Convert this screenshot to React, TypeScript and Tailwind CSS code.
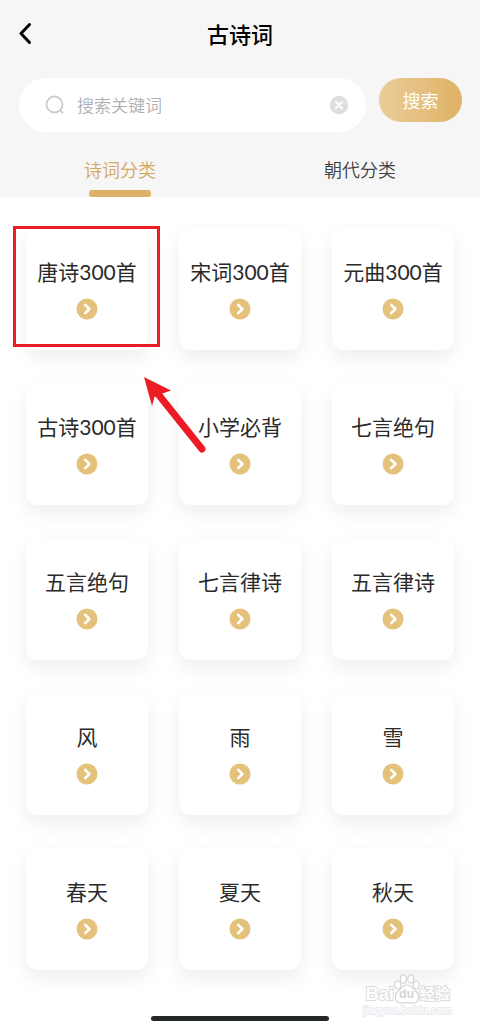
import { useState } from "react";

const categories: string[] = [
    '唐诗300首',
    '宋词300首',
    '元曲300首',
    '古诗300首',
    '小学必背',
    '七言绝句',
    '五言绝句',
    '七言律诗',
    '五言律诗',
    '风',
    '雨',
    '雪',
    '春天',
    '夏天',
    '秋天',
];

const tabs = ['诗词分类', '朝代分类'];

function Tab({ label, active, onClick }: { label: string; active: boolean; onClick: () => void }) {
    return (
        <button
            type="button"
            role="tab"
            aria-selected={active}
            onClick={onClick}
            className="flex flex-1 flex-col items-center gap-[9px] pt-[25px]"
        >
            <span className={active ? 'text-lg leading-6 font-[350] text-[#d4a75c]' : 'text-lg leading-6 font-[350] text-[#404040]'}>{label}</span>
            <span className={active ? 'h-[7px] w-[62px] rounded-[3px] bg-[#dcb16a]' : 'h-[7px] w-[62px]'} />
        </button>
    );
}

function Highlight() {
    return (
        <>
            <div className="pointer-events-none absolute -top-0.5 -left-[13px] h-[121px] w-[147px] border-3 border-[#ed1c24]" />
            <svg
                viewBox="0 0 64 78"
                className="pointer-events-none absolute top-[148px] left-[117px] z-10 h-[78px] w-16"
                aria-hidden="true"
            >
                <path d="M15 18 59 73" stroke="#ed1c24" strokeWidth="7" strokeLinecap="round" />
                <path d="M1 1 28 14.5 18 18 11.5 21 9 30Z" fill="#ed1c24" />
            </svg>
        </>
    );
}

function CategoryCard({ title, highlighted }: { title: string; highlighted: boolean }) {
    return (
        <div className="relative">
            <a
                href="#"
                className="flex h-[122px] flex-col items-center gap-3 rounded-xl bg-white pt-[30px] shadow-[0_8px_20px_rgba(0,0,0,0.07)]"
            >
                <span className="font-['Lato','Noto_Sans_CJK_SC',sans-serif] text-[21px] leading-[28px] whitespace-nowrap text-[#2a2a2a]">{title}</span>
                <svg viewBox="0 0 22 22" className="size-[22px]" aria-hidden="true">
                    <circle cx="11" cy="11" r="10.5" fill="#e5c27b" />
                    <path
                        d="M9.2 6.8 13.4 11 9.2 15.2"
                        fill="none"
                        stroke="#fff"
                        strokeWidth="2.6"
                        strokeLinecap="round"
                        strokeLinejoin="round"
                    />
                </svg>
            </a>
            {highlighted && <Highlight />}
        </div>
    );
}

function Watermark() {
    return (
        <div className="pointer-events-none absolute right-7 bottom-3 flex flex-col items-center font-['Liberation_Sans','Noto_Sans_CJK_SC',sans-serif] text-white">
            <div className="flex items-end font-bold [-webkit-text-stroke:2px_#dcdcdc] [paint-order:stroke_fill]">
                <span className="text-lg leading-5">Bai</span>
                <span className="relative flex h-[30px] w-[26px] items-end justify-center pb-0.5">
                    <svg viewBox="0 0 26 30" className="absolute inset-0 h-[30px] w-[26px] [paint-order:normal]" fill="#fff" stroke="#d4d4d4" strokeWidth="1.2" aria-hidden="true">
                        <ellipse cx="3.8" cy="11" rx="3" ry="4" />
                        <ellipse cx="9.4" cy="5" rx="3" ry="4.2" />
                        <ellipse cx="16.8" cy="5" rx="3" ry="4.2" />
                        <ellipse cx="22.3" cy="11" rx="3" ry="4" />
                        <path d="M13 11C9 11 8 14 5 16.500C0 20 0 28 6 29C9 29.5 10 28.5 13 28.5S17 29.5 20 29C26 28 26 20 21 16.500C18 14 17 11 13 11Z" />
                    </svg>
                    <span className="relative text-xs leading-4 text-[#d4d4d4] [-webkit-text-stroke:0]">du</span>
                </span>
                <span className="text-[15px] leading-5">经验</span>
            </div>
            <span className="text-[11px] leading-3 [-webkit-text-stroke:2px_#ececec] [paint-order:stroke_fill]">jingyan.baidu.com</span>
        </div>
    );
}

export default function App() {
    const [activeTab, setActiveTab] = useState(0);
    const [keyword, setKeyword] = useState('');

    return (
        <div className="relative flex min-h-screen flex-col bg-white font-['Noto_Sans_CJK_SC',sans-serif]">
            <header className="bg-[#f6f6f6]">
                <div className="grid h-[70px] grid-cols-[1fr_auto_1fr] items-center px-4 pb-1">
                    <button type="button" aria-label="返回" className="justify-self-start">
                        <svg viewBox="0 0 20 24" className="h-6 w-5" aria-hidden="true">
                            <path
                                d="M13.5 3.5 5 12.5 13.5 21.5"
                                fill="none"
                                stroke="#000"
                                strokeWidth="3"
                                strokeLinecap="round"
                                strokeLinejoin="round"
                            />
                        </svg>
                    </button>
                    <h1 className="text-[22px] leading-[30px] font-medium text-black">古诗词</h1>
                </div>

                <form onSubmit={(e) => e.preventDefault()} className="flex items-start gap-[13px] pt-2 pr-[18px] pl-[19px]">
                    <div className="flex h-[54px] min-w-0 flex-1 items-center rounded-full bg-white pr-[17px] pl-[26px]">
                        <svg viewBox="0 0 20 20" className="size-5 shrink-0" fill="none" stroke="#cbcbcb" strokeWidth="1.8" strokeLinecap="round" aria-hidden="true">
                            <circle cx="9.5" cy="9.5" r="8" />
                            <path d="M15.3 15.3 17.6 17.8" />
                        </svg>
                        <input
                            type="text"
                            aria-label="搜索关键词"
                            placeholder="搜索关键词"
                            value={keyword}
                            onChange={(e) => setKeyword(e.target.value)}
                            className="ml-3 min-w-0 flex-1 text-[17px] leading-6 font-[350] text-[#333] outline-none placeholder:text-[#b0b0b0]"
                        />
                        <button type="button" aria-label="清除" onClick={() => setKeyword('')}>
                            <svg viewBox="0 0 20 20" className="size-5" aria-hidden="true">
                                <circle cx="10" cy="10" r="9.2" fill="#dedede" />
                                <path d="M6.8 6.8 13.2 13.2M13.2 6.8 6.8 13.2" stroke="#fff" strokeWidth="2" strokeLinecap="round" />
                            </svg>
                        </button>
                    </div>
                    <button
                        type="submit"
                        className="h-11 w-[83px] rounded-full bg-linear-to-r from-[#e9cd99] to-[#dfb265] text-lg leading-6 text-white"
                    >
                        搜索
                    </button>
                </form>

                <div role="tablist" className="flex">
                    {tabs.map((tab, index) => (
                        <Tab key={tab} label={tab} active={activeTab === index} onClick={() => setActiveTab(index)} />
                    ))}
                </div>
            </header>

            <main className="grid grid-cols-3 gap-x-[31px] gap-y-[33px] px-[26px] pt-[31px]">
                {categories.map((title, index) => (
                    <CategoryCard key={title} title={title} highlighted={index === 0} />
                ))}
            </main>

            {/* Home indicator */}
            <div className="mt-auto flex justify-center pt-10 pb-[7px]">
                <div className="h-[5px] w-[178px] rounded-full bg-[#242827]" />
            </div>

            <Watermark />
        </div>
    );
}
